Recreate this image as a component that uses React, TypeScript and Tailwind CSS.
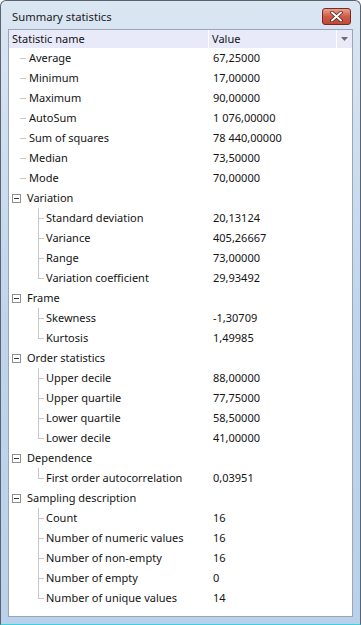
import React from 'react';

type Row = { name: string; value?: string; group?: boolean; child?: boolean; last?: boolean };

const rows: Row[] = [
  { name: 'Average', value: '67,25000' },
  { name: 'Minimum', value: '17,00000' },
  { name: 'Maximum', value: '90,00000' },
  { name: 'AutoSum', value: '1 076,00000' },
  { name: 'Sum of squares', value: '78 440,00000' },
  { name: 'Median', value: '73,50000' },
  { name: 'Mode', value: '70,00000' },
  { name: 'Variation', group: true },
  { name: 'Standard deviation', value: '20,13124', child: true },
  { name: 'Variance', value: '405,26667', child: true },
  { name: 'Range', value: '73,00000', child: true },
  { name: 'Variation coefficient', value: '29,93492', child: true, last: true },
  { name: 'Frame', group: true },
  { name: 'Skewness', value: '-1,30709', child: true },
  { name: 'Kurtosis', value: '1,49985', child: true, last: true },
  { name: 'Order statistics', group: true },
  { name: 'Upper decile', value: '88,00000', child: true },
  { name: 'Upper quartile', value: '77,75000', child: true },
  { name: 'Lower quartile', value: '58,50000', child: true },
  { name: 'Lower decile', value: '41,00000', child: true, last: true },
  { name: 'Dependence', group: true },
  { name: 'First order autocorrelation', value: '0,03951', child: true, last: true },
  { name: 'Sampling description', group: true },
  { name: 'Count', value: '16', child: true },
  { name: 'Number of numeric values', value: '16', child: true },
  { name: 'Number of non-empty', value: '16', child: true },
  { name: 'Number of empty', value: '0', child: true },
  { name: 'Number of unique values', value: '14', child: true, last: true },
];

const Expander = () => (
  <div className="w-[9px] h-[9px] border border-[#8e8f8f] bg-white flex items-center justify-center shrink-0">
    <div className="w-[5px] h-px bg-[#333]" />
  </div>
);

const TreeRow = ({ r }: { r: Row }) => {
  if (r.group) {
    return (
      <div className="h-5 flex items-center">
        <div className="w-[200px] flex items-center pl-[3px] gap-[6px]">
          <Expander />
          <span>{r.name}</span>
        </div>
      </div>
    );
  }
  return (
    <div className="h-5 flex items-center">
      <div className="w-[200px] h-full flex items-center">
        {r.child ? (
          <>
            <div className="relative w-[37px] h-full shrink-0">
              <div className={`absolute left-[29px] top-0 w-px bg-[#c8c8c8] ${r.last ? 'h-[10px]' : 'h-5'}`} />
              <div className="absolute left-[29px] top-[10px] w-[6px] h-px bg-[#c8c8c8]" />
            </div>
            <span>{r.name}</span>
          </>
        ) : (
          <>
            <div className="relative w-[20px] h-full shrink-0">
              <div className="absolute left-[11px] top-[10px] w-[6px] h-px bg-[#c8c8c8]" />
            </div>
            <span>{r.name}</span>
          </>
        )}
      </div>
      <span className="pl-[4px]">{r.value}</span>
    </div>
  );
};

export default function App() {
  return (
    <div
      className="w-[361px] h-[625px] bg-white text-[11px] text-[#141414]"
      style={{ fontFamily: '"Noto Sans", "Open Sans", sans-serif' }}
    >
      <div className="w-full h-full border border-[#5a6470] border-b-[#3fd0e0] rounded-t-[6px] bg-gradient-to-b from-[#dbe6f3] via-[#c0d5ec] to-[#b9d1ea] flex flex-col px-[7px] pb-[7px]">
        <div className="h-[28px] flex items-center justify-between pl-[4px] pr-[2px] shrink-0">
          <span className="text-[11.25px] text-[#1a1a1a] pt-[4px]">Summary statistics</span>
          <div className="w-[29px] h-[17px] rounded-[3px] border border-[#7a2a22] bg-gradient-to-b from-[#e8a091] via-[#cf5a46] to-[#c04a36] flex items-center justify-center mt-[2px]">
            <svg width="13" height="11" viewBox="0 0 13 11">
              <path d="M2 1.5 L11 9.5 M11 1.5 L2 9.5" stroke="#4a1a14" strokeWidth="3.4" strokeLinecap="round" />
              <path d="M2 1.5 L11 9.5 M11 1.5 L2 9.5" stroke="#ffffff" strokeWidth="2" strokeLinecap="round" />
            </svg>
          </div>
        </div>
        <div className="flex-1 bg-white border border-[#9aa6b4] flex flex-col">
          <div className="h-[18px] bg-[#e8eafa] flex items-center shrink-0">
            <div className="w-[200px] pl-[3px] border-r border-white h-full flex items-center">Statistic name</div>
            <div className="w-[128px] pl-[3px] border-r border-white h-full flex items-center">Value</div>
            <div className="flex-1 flex items-center justify-center">
              <svg width="7" height="4" viewBox="0 0 7 4"><path d="M0 0 L7 0 L3.5 4 Z" fill="#6d6d6d" /></svg>
            </div>
          </div>
          <div>
            {rows.map((r) => (
              <TreeRow key={r.name} r={r} />
            ))}
          </div>
        </div>
      </div>
    </div>
  );
}
